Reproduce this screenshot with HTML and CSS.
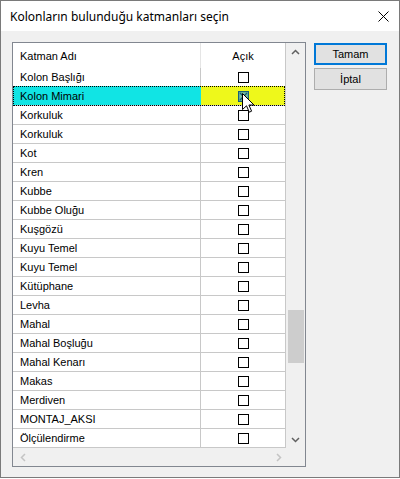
FILE: index.html
```html
<!DOCTYPE html>
<html lang="tr">
<head>
    <meta charset="UTF-8">
    <meta name="viewport" content="width=device-width, initial-scale=1.0">
    <title>Katman Seçimi</title>
    <link rel="stylesheet" href="styles.css">
</head>
<body>

<div class="window">
    <div class="titlebar">
        <span class="title">Kolonların bulunduğu katmanları seçin</span>
        <svg class="close" width="11" height="11" viewBox="0 0 11 11">
            <path d="M0.5 0.5 L10.5 10.5 M10.5 0.5 L0.5 10.5" stroke="#000" stroke-width="1" fill="none"/>
        </svg>
    </div>

    <div class="content">
        <div class="listbox">
            <div class="grid">
                <div class="row header">
                    <div class="cell name">Katman Adı</div>
                    <div class="cell check">Açık</div>
                </div>
                <div class="row"><div class="cell name">Kolon Başlığı</div><div class="cell check"><span class="box"></span></div></div>
                <div class="row selected">
                    <div class="cell name">Kolon Mimari</div>
                    <div class="cell check">
                        <svg class="checked" width="11" height="11" viewBox="0 0 11 11">
                            <rect x="0.5" y="0.5" width="10" height="10" fill="#4f9c8c" stroke="#165f7a"/>
                            <rect x="1.5" y="1.5" width="8" height="8" fill="#7cc0a0"/>
                            <path d="M2 2 L9 9 M9 2 L2 9" stroke="#135b78" stroke-width="1.4"/>
                        </svg>
                        <svg class="cursor" width="14" height="22" viewBox="0 0 14 22">
                            <path d="M0.5 0.5 L0.5 16.5 L4.5 12.8 L7.3 19.2 L9.6 18.2 L6.9 12 L12 12 Z" fill="#fff" stroke="#000" stroke-width="1"/>
                        </svg>
                    </div>
                </div>
                <div class="row"><div class="cell name">Korkuluk</div><div class="cell check"><span class="box"></span></div></div>
                <div class="row"><div class="cell name">Korkuluk</div><div class="cell check"><span class="box"></span></div></div>
                <div class="row"><div class="cell name">Kot</div><div class="cell check"><span class="box"></span></div></div>
                <div class="row"><div class="cell name">Kren</div><div class="cell check"><span class="box"></span></div></div>
                <div class="row"><div class="cell name">Kubbe</div><div class="cell check"><span class="box"></span></div></div>
                <div class="row"><div class="cell name">Kubbe Oluğu</div><div class="cell check"><span class="box"></span></div></div>
                <div class="row"><div class="cell name">Kuşgözü</div><div class="cell check"><span class="box"></span></div></div>
                <div class="row"><div class="cell name">Kuyu Temel</div><div class="cell check"><span class="box"></span></div></div>
                <div class="row"><div class="cell name">Kuyu Temel</div><div class="cell check"><span class="box"></span></div></div>
                <div class="row"><div class="cell name">Kütüphane</div><div class="cell check"><span class="box"></span></div></div>
                <div class="row"><div class="cell name">Levha</div><div class="cell check"><span class="box"></span></div></div>
                <div class="row"><div class="cell name">Mahal</div><div class="cell check"><span class="box"></span></div></div>
                <div class="row"><div class="cell name">Mahal Boşluğu</div><div class="cell check"><span class="box"></span></div></div>
                <div class="row"><div class="cell name">Mahal Kenarı</div><div class="cell check"><span class="box"></span></div></div>
                <div class="row"><div class="cell name">Makas</div><div class="cell check"><span class="box"></span></div></div>
                <div class="row"><div class="cell name">Merdiven</div><div class="cell check"><span class="box"></span></div></div>
                <div class="row"><div class="cell name">MONTAJ_AKSI</div><div class="cell check"><span class="box"></span></div></div>
                <div class="row"><div class="cell name">Ölçülendirme</div><div class="cell check"><span class="box"></span></div></div>
            </div>

            <div class="vscroll">
                <div class="arrow">
                    <svg width="9" height="6" viewBox="0 0 9 6"><path d="M1 5 L4.5 1.5 L8 5" stroke="#606060" stroke-width="1.5" fill="none"/></svg>
                </div>
                <div class="track"><div class="thumb"></div></div>
                <div class="arrow">
                    <svg width="9" height="6" viewBox="0 0 9 6"><path d="M1 1 L4.5 4.5 L8 1" stroke="#606060" stroke-width="1.5" fill="none"/></svg>
                </div>
            </div>

            <div class="hscroll">
                <svg width="6" height="9" viewBox="0 0 6 9"><path d="M5 1 L1.5 4.5 L5 8" stroke="#c4c4c4" stroke-width="1.5" fill="none"/></svg>
                <svg width="6" height="9" viewBox="0 0 6 9"><path d="M1 1 L4.5 4.5 L1 8" stroke="#c4c4c4" stroke-width="1.5" fill="none"/></svg>
            </div>
            <div class="corner"></div>
        </div>

        <div class="buttons">
            <button class="btn default">Tamam</button>
            <button class="btn">İptal</button>
        </div>
    </div>
</div>

</body>
</html>
```

FILE: styles.css
```css
* {
    margin: 0;
    padding: 0;
    box-sizing: border-box;
}

body {
    background-color: #fff;
    font-family: 'Liberation Sans', Arial, sans-serif;
    font-size: 11px;
    color: #000;
}

.window {
    width: 400px;
    height: 478px;
    border: 1px solid #7a7a7a;
    background-color: #f0f0f0;
}

.titlebar {
    height: 30px;
    background-color: #fff;
    display: flex;
    align-items: center;
    justify-content: space-between;
    padding: 0 10px 0 9px;
}

.title {
    font-family: 'Noto Sans', sans-serif;
    font-size: 12px;
}

.close {
    display: block;
}

.content {
    display: flex;
    gap: 8px;
    padding: 11px 0 0 11px;
}

.listbox {
    width: 294px;
    height: 425px;
    border: 1px solid #828790;
    background-color: #fff;
    display: grid;
    grid-template-columns: 273px 19px;
    grid-template-rows: 405px 18px;
}

.grid {
    border-right: 1px solid #c8c8c8;
    overflow: hidden;
}

.row {
    display: grid;
    grid-template-columns: 188px 84px;
    height: 19px;
    border-bottom: 1px solid #c8c8c8;
    position: relative;
}

.row.header {
    height: 25px;
    border-bottom: none;
}

.cell {
    display: flex;
    align-items: center;
}

.cell.name {
    padding-left: 7px;
    border-right: 1px solid #c8c8c8;
}

.header .cell.name {
    border-right-color: #e5e5e5;
}

.cell.check {
    justify-content: center;
    position: relative;
}

.box {
    width: 11px;
    height: 11px;
    border: 1px solid #000;
    background-color: #fff;
}

.selected {
    margin-top: -1px;
    height: 20px;
}

.selected .cell.name {
    background-color: #11e4e4;
    border-right: 1px solid #11e4e4;
    padding-top: 1px;
}

.selected .cell.check {
    background-color: #eef81b;
    padding-top: 1px;
}

.selected::after {
    content: "";
    position: absolute;
    left: 0;
    right: 0;
    top: 0;
    bottom: -1px;
    border: 1px dotted #000;
}

.checked {
    display: block;
}

.cursor {
    position: absolute;
    left: 41px;
    top: 7px;
    z-index: 2;
}

.vscroll {
    background-color: #f0f0f0;
    display: flex;
    flex-direction: column;
}

.vscroll .arrow {
    height: 17px;
    display: flex;
    align-items: center;
    justify-content: center;
}

.track {
    flex: 1;
    padding: 250px 1px 0 2px;
}

.thumb {
    height: 53px;
    background-color: #cdcdcd;
}

.hscroll {
    background-color: #f0f0f0;
    display: flex;
    align-items: center;
    justify-content: space-between;
    padding: 0 4px 0 7px;
}

.corner {
    background-color: #f0f0f0;
}

.buttons {
    display: flex;
    flex-direction: column;
    gap: 3px;
    padding-top: 1px;
}

.btn {
    width: 73px;
    height: 22px;
    background-color: #e1e1e1;
    border: 1px solid #adadad;
    font-family: 'Liberation Sans', Arial, sans-serif;
    font-size: 11px;
    color: #000;
}

.btn.default {
    border: 2px solid #0078d7;
}
```
